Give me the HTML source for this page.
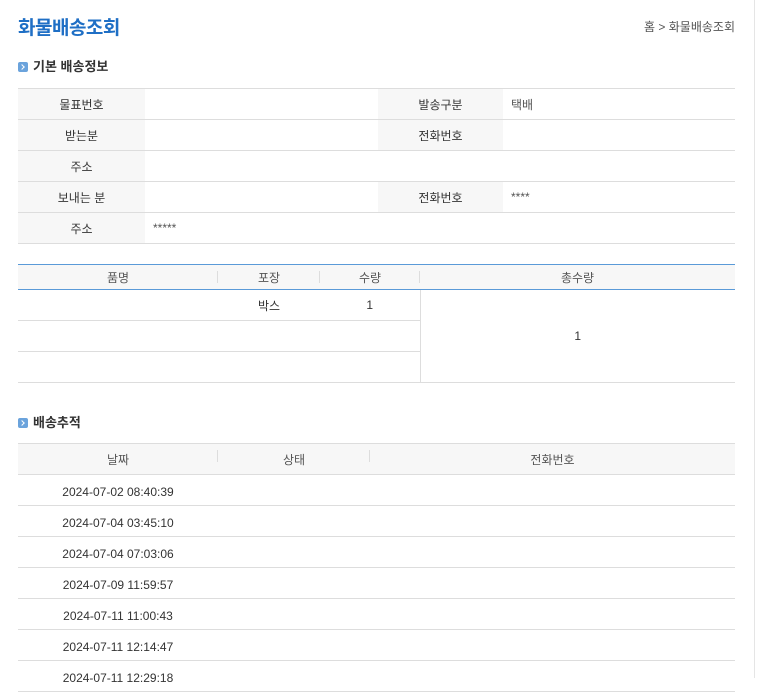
<!DOCTYPE html>
<html><head><meta charset="utf-8"><style>
*{margin:0;padding:0;box-sizing:border-box}
body{width:759px;height:678px;overflow:hidden;background:#fff;font-family:"Liberation Sans","Noto Sans CJK KR",sans-serif;font-size:12px;color:#333;position:relative}
.abs{position:absolute}
h1{position:absolute;left:18px;top:13px;font-size:19px;color:#1f6fc5;font-weight:bold;letter-spacing:-0.5px}
.bc{position:absolute;right:24px;top:18px;font-size:12px;color:#555}
.st{position:absolute;left:18px;font-size:13px;font-weight:bold;color:#333}
.st i{display:inline-block;width:10px;height:10px;background:#6ba3dc;border-radius:2px;margin-right:5px;vertical-align:-1px;position:relative}
.st i:after{content:"";position:absolute;left:2px;top:3px;width:3px;height:3px;border-right:1px solid #fff;border-top:1px solid #fff;transform:rotate(45deg)}
table{position:absolute;left:18px;width:717px;border-collapse:collapse;table-layout:fixed}
td,th{height:31px;border-bottom:1px solid #ddd;font-weight:normal;text-align:center;padding:0}
.info{top:88px;border-top:1px solid #ddd}
.info .l{background:#f7f7f7;color:#333}
.info .v{text-align:left;padding-left:8px;color:#555}
.prod{top:264px;border-top:1px solid #5a9ad8}
.prod th,.trk th{height:25px;background:#f7f7f7;color:#555;position:relative}
.prod th{border-bottom:1px solid #5a9ad8}
.sep:after{content:"";position:absolute;right:0;top:6px;height:12px;border-right:1px solid #ddd}
.trk{top:443px;border-top:1px solid #ddd}
.trk th{height:31px}
.trk td{padding-top:3px}
</style></head><body>
<h1>화물배송조회</h1>
<div class="bc">홈 &gt; 화물배송조회</div>
<div class="st" style="top:56px"><i></i>기본 배송정보</div>
<table class="info">
<colgroup><col style="width:127px"><col style="width:233px"><col style="width:125px"><col></colgroup>
<tr><td class="l">물표번호</td><td class="v"></td><td class="l">발송구분</td><td class="v">택배</td></tr>
<tr><td class="l">받는분</td><td class="v"></td><td class="l">전화번호</td><td class="v"></td></tr>
<tr><td class="l">주소</td><td class="v" colspan="3"></td></tr>
<tr><td class="l">보내는 분</td><td class="v"></td><td class="l">전화번호</td><td class="v">****</td></tr>
<tr><td class="l">주소</td><td class="v" colspan="3">*****</td></tr>
</table>
<table class="prod">
<colgroup><col style="width:200px"><col style="width:102px"><col style="width:100px"><col></colgroup>
<tr><th class="sep">품명</th><th class="sep">포장</th><th class="sep">수량</th><th>총수량</th></tr>
<tr><td></td><td>박스</td><td>1</td><td rowspan="3" style="border-left:1px solid #ddd">1</td></tr>
<tr><td colspan="3"></td></tr>
<tr><td colspan="3"></td></tr>
</table>
<div class="st" style="top:412px"><i></i>배송추적</div>
<table class="trk">
<colgroup><col style="width:200px"><col style="width:152px"><col></colgroup>
<tr><th class="sep">날짜</th><th class="sep">상태</th><th>전화번호</th></tr>
<tr><td>2024-07-02 08:40:39</td><td></td><td></td></tr>
<tr><td>2024-07-04 03:45:10</td><td></td><td></td></tr>
<tr><td>2024-07-04 07:03:06</td><td></td><td></td></tr>
<tr><td>2024-07-09 11:59:57</td><td></td><td></td></tr>
<tr><td>2024-07-11 11:00:43</td><td></td><td></td></tr>
<tr><td>2024-07-11 12:14:47</td><td></td><td></td></tr>
<tr><td>2024-07-11 12:29:18</td><td></td><td></td></tr>
</table>
<div class="abs" style="left:754px;top:0;width:1px;height:678px;background:#e5e5e5"></div>
</body></html>
